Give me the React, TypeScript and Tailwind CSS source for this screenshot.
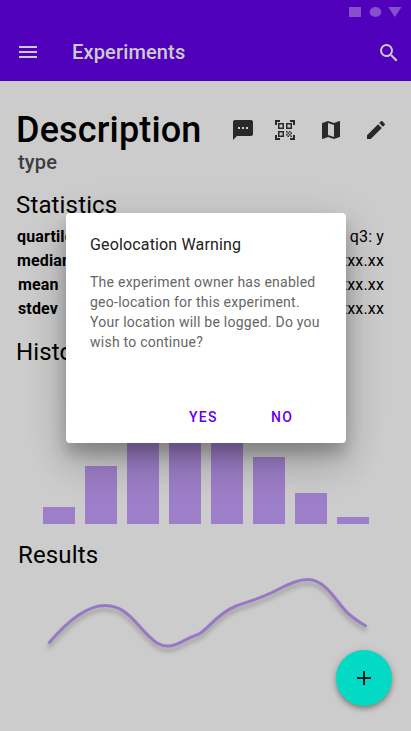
import type { ReactNode } from "react";
import { MdAdd, MdEdit, MdMap, MdMenu, MdQrCodeScanner, MdSearch, MdSms } from "react-icons/md";

const bars = ["h-[17px]", "h-[58px]", "h-[100px]", "h-[130px]", "h-[110px]", "h-[67px]", "h-[31px]", "h-[7px]"];

function Stat({ label, value, inset }: { label: string; value: string; inset?: boolean }) {
  return (
    <div className="flex h-6 items-center justify-between">
      <dt className={inset ? "pl-px font-bold" : "font-bold"}>{label}</dt>
      <dd>{value}</dd>
    </div>
  );
}

function SectionTitle({ children }: { children: ReactNode }) {
  return <h2 className="h-8 text-2xl leading-8 tracking-[0.15px]">{children}</h2>;
}

function AppBar() {
  return (
    <header className="h-[81px] bg-[#5000bb] text-[#cccccc]">
      <div className="flex h-6 justify-end pr-[9px] pt-[7px]">
        <svg width="53" height="10" viewBox="0 0 53 10" className="fill-[#8650cc]">
          <rect width="12" height="10" />
          <ellipse cx="26.5" cy="5" rx="5.8" ry="5" />
          <path d="M39.200 0h13.300l-6.650 10z" />
        </svg>
      </div>
      <div className="flex h-14 items-center pl-4 pr-[10px]">
        <MdMenu size={24} />
        <h1 className="ml-8 flex-1 text-xl font-medium tracking-[0.15px]">Experiments</h1>
        <MdSearch size={24} className="translate-y-px" />
      </div>
    </header>
  );
}

function WarningDialog() {
  return (
    <div
      role="dialog"
      className="absolute left-[66px] top-[213px] flex h-[230px] w-[280px] flex-col rounded-[4px] bg-white px-6 pt-5 shadow-[0_11px_15px_rgba(0,0,0,0.2),0_9px_46px_rgba(0,0,0,0.12),0_24px_38px_rgba(0,0,0,0.14)]"
    >
      <h2 className="text-base leading-6 tracking-[0.15px] text-[#212121]">Geolocation Warning</h2>
      <p className="mt-[15px] whitespace-nowrap text-sm leading-5 tracking-[0.25px] text-[#666666]">
        The experiment owner has enabled
        <br />
        geo-location for this experiment.
        <br />
        Your location will be logged. Do you
        <br />
        wish to continue?
      </p>
      <div className="mt-auto flex h-[52px] items-center pl-[99px] text-sm font-medium tracking-[1.25px] text-[#6200ee]">
        <button className="w-[82px] text-left">YES</button>
        <button>NO</button>
      </div>
    </div>
  );
}

export default function App() {
  return (
    <div className="relative h-[731px] w-[411px] overflow-hidden bg-[#cccccc] font-['Roboto',sans-serif] text-black">
      <AppBar />
      <main>
        <div className="flex h-[68px] items-end pl-4">
          <h1 className="-mb-px w-[215px] text-4xl leading-10 font-medium tracking-[0.15px]">Description</h1>
          <div className="flex pb-[7px] text-[#292929]">
            <MdSms size={24} />
            <MdQrCodeScanner size={24} className="ml-[18px]" />
            <MdMap size={24} className="ml-[22px]" />
            <MdEdit size={24} className="ml-[21px]" />
          </div>
        </div>
        <p className="-mt-px pl-[18px] text-xl leading-7 font-medium tracking-[0.15px] text-[#3d3d3d]">type</p>
        <section className="pl-4 pr-[27px] pt-[13px]">
          <SectionTitle>Statistics</SectionTitle>
          <dl className="mt-1 pl-px text-base leading-6 tracking-[0.15px]">
            <Stat label="quartiles" value="q3: y" />
            <Stat label="median" value="xxx.xx" />
            <Stat label="mean" value="xxx.xx" inset />
            <Stat label="stdev" value="xxx.xx" inset />
          </dl>
        </section>
        <section className="pt-[15px]">
          <div className="pl-4"><SectionTitle>Histogram</SectionTitle></div>
          <div className="flex h-[156px] items-end gap-[10px] pl-[43px]">
            {bars.map((height, i) => (
              <div key={i} className={`w-8 bg-[#9d7ec8] ${height}`} />
            ))}
          </div>
        </section>
        <section className="pt-[15px]">
          <div className="pl-[18px]"><SectionTitle>Results</SectionTitle></div>
          <svg
            width="411"
            height="90"
            viewBox="0 570 411 90"
            fill="none"
            className="drop-shadow-[0_4px_2px_rgba(0,0,0,0.25)]"
          >
            <path
              d="M48.5 642.500C65 623 85 604.500 105 604.500C130 604.500 138 629 157 642C172 651 183 638 198 633.500C209 628 215 614 236 605C255 598.500 262 597 279 588C291 582 299 578.500 308 578.500C323 578.500 334 596 343 607C350 616 358 620 366.500 625.500"
              stroke="#9878c6"
              strokeWidth="3"
            />
          </svg>
        </section>
      </main>
      <button className="absolute left-[336px] top-[650px] flex size-14 items-center justify-center rounded-full bg-[#03dac5] text-[#00201c] shadow-[0_3px_5px_rgba(0,0,0,0.3),0_1px_10px_rgba(0,0,0,0.12)]">
        <MdAdd size={24} />
      </button>
      <WarningDialog />
    </div>
  );
}
